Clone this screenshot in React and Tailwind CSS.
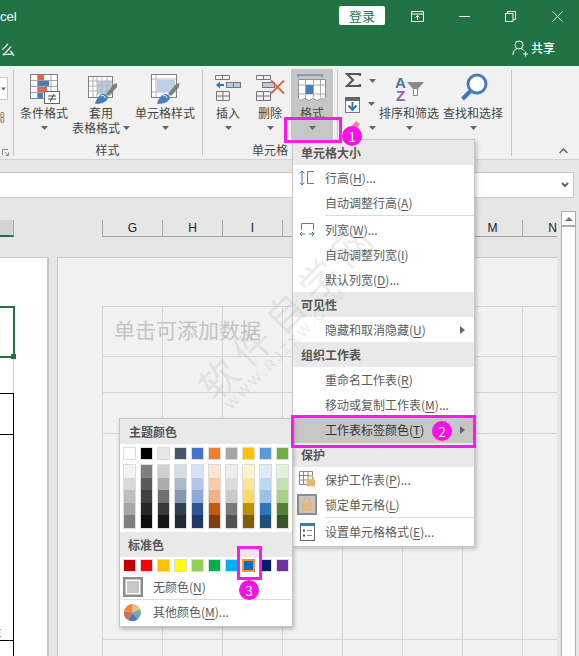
import React from "react";

const font = "font-['Noto_Sans_CJK_SC','Noto_Sans',sans-serif]";

const Caret = ({ className = "" }) => (
  <svg width="7" height="4" viewBox="0 0 7 4" className={className}><path d="M0 0h7L3.5 4z" fill="#666" /></svg>
);

const Ico = ({ box, w, h, children, className = "" }) => (
  <svg width={w} height={h} viewBox={`${box[0]} ${box[1]} ${w} ${h}`} className={className} fill="none">{children}</svg>
);

const Brush = ({ dx = 0, dy = 0 }) => (
  <g transform={`translate(${dx} ${dy})`}>
    <path d="M107 94 L115 84 L118.5 83 L118 87 L110 96z" fill="#7f7f7f" />
    <path d="M96 104 C97 99 100 95 104 94 C107 94 109 96 109 98 C108 101 104 104 96 104z" fill="#4a7ebb" />
    <path d="M102 96 a2.5 2.5 0 0 1 4 2" stroke="#fff" strokeWidth="1" />
  </g>
);

const icons = {
  cond: (
    <Ico box={[28, 74]} w={32} h={31}>
      <rect x="30.5" y="74.5" width="27" height="24" fill="#fff" stroke="#808080" />
      <path d="M37.5 75v23M51 75v23M31 80.5h26M31 86.5h26M31 92.5h26" stroke="#a6a6a6" />
      <rect x="38" y="75" width="6" height="5" fill="#e0684b" />
      <rect x="38" y="81" width="11" height="5" fill="#4a7ebb" />
      <rect x="38" y="87" width="9" height="5" fill="#e0684b" />
      <rect x="38" y="93" width="5" height="5" fill="#4a7ebb" />
      <rect x="44.5" y="91.5" width="15" height="12" fill="#fff" stroke="#666" />
      <path d="M48 96h8M48 99h8M54 94l-4 8" stroke="#444" />
    </Ico>
  ),
  table: (
    <Ico box={[86, 74]} w={32} h={31}>
      <rect x="89.5" y="76.5" width="24" height="21" fill="#fff" stroke="#808080" />
      <rect x="98" y="81" width="15" height="14" fill="#b8cce4" />
      <path d="M94 77v20M98 77v20M103 77v20M108 77v20M90 81h23M90 86h23M90 91h23" stroke="#b5b5b5" />
      <Brush />
    </Ico>
  ),
  cell: (
    <Ico box={[150, 74]} w={32} h={31}>
      <rect x="152.5" y="74.5" width="25" height="23" fill="#fff" stroke="#808080" />
      <path d="M153 79h24M153 92h24M157 75v22" stroke="#b5b5b5" />
      <rect x="158" y="80" width="18" height="12" fill="#bfd0e6" />
      <Brush dx={62} />
    </Ico>
  ),
  insert: (
    <Ico box={[212, 74]} w={32} h={31}>
      <path d="M215.5 75.5h14v4h-14zM222.5 75.5v4M216.5 91.5h13v9h-13zM223 91.5v9M216.5 96h13" stroke="#777" />
      <rect x="226.5" y="82.5" width="14" height="5" fill="#b8cce4" stroke="#777" />
      <path d="M233.5 82.5v5" stroke="#777" />
      <path d="M224 85h-5" stroke="#2e75b6" strokeWidth="2" />
      <path d="M216 85l4-3.5v7z" fill="#2e75b6" />
    </Ico>
  ),
  del: (
    <Ico box={[254, 74]} w={32} h={31}>
      <path d="M256.5 75.5h14v4h-14zM263.5 75.5v4M256.5 91.5h14v9h-14zM263.5 91.5v9M256.5 96h14" stroke="#777" />
      <rect x="262.5" y="82.5" width="12" height="5" fill="#b8cce4" stroke="#777" />
      <path d="M271 80.5l13 13M284 80.5l-13 13" stroke="#d9694f" strokeWidth="2" />
    </Ico>
  ),
  format: (
    <Ico box={[296, 74]} w={32} h={30}>
      <path d="M298 73v4M322 73v4M299 75h22" stroke="#3f77b5" />
      <path d="M298 79h28v19l-2 2-3-1-4 2-4-2-4 2-4-2-4 2-3-2z" fill="#fff" />
      <path d="M305.5 80v20M313.5 80v17M320.5 80v17M298 85h28M298 94h28" stroke="#a8a8a8" />
      <path d="M298.5 79.5h27v18l-1.5 2-3-1-4 2-4-2-4 2-4-2-4 2-2.5-2z" stroke="#8f8f8f" />
      <rect x="306" y="85" width="7" height="9" fill="#4a7ebb" />
    </Ico>
  ),
};

const RibbonBtn = ({ w, icon, lines, arrowInline, className = "", iconClass = "" }) => (
  <div className={`flex flex-col items-center ${className}`} style={{ width: w }}>
    <div className={`h-[35px] pt-[4px] ${iconClass}`}>{icon}</div>
    {lines.map((l, i) => (
      <div key={i} className="flex items-center gap-[3px] whitespace-nowrap text-[12px] leading-[15px]">
        {l}
        {arrowInline && i === lines.length - 1 && <Caret />}
      </div>
    ))}
    {!arrowInline && <div className="flex h-[15px] items-center"><Caret /></div>}
  </div>
);

const Header = ({ children, h = "h-[25px]" }) => (
  <div className={`flex ${h} items-center bg-[#e9e9e9] pl-[8px] text-[12px] font-bold text-[#555]`}>{children}</div>
);

const U = ({ children }) => <span className="underline underline-offset-2">{children}</span>;

const Item = ({ icon, label, k, tail = "", arrow, className = "", h = "h-[25px]" }) => (
  <div className={`relative flex ${h} items-center pl-[32px] text-[12px] text-[#5a5a5a] ${className}`}>
    {icon && <span className="absolute left-[3px] top-[1px] flex h-[23px] w-[22px] items-center justify-center">{icon}</span>}
    <span className="whitespace-nowrap">{label}(<U>{k}</U>){tail}</span>
    {arrow && (
      <svg width="5" height="8" viewBox="0 0 5 8" className="absolute right-[9px] top-[9px]"><path d="M0 0l5 4-5 4z" fill="#666" /></svg>
    )}
  </div>
);

const Sep = () => <div className="mb-px ml-[32px] h-px bg-[#dcdcdc]" />;

const Lock = ({ x = 0, y = 0, s = 1 }) => (
  <g transform={`translate(${x} ${y}) scale(${s})`}>
    <path d="M2.5 5V3.2a2.5 2.5 0 0 1 5 0V5" stroke="#e2b877" strokeWidth="1.4" fill="none" />
    <rect x="0.5" y="5" width="9" height="7" fill="#e2b877" />
  </g>
);

const theme = ["#ffffff", "#000000", "#e7e6e6", "#44546a", "#4472c4", "#ed7d31", "#a5a5a5", "#ffc000", "#5b9bd5", "#70ad47"];
const shades = [
  ["#f2f2f2", "#d9d9d9", "#bfbfbf", "#a6a6a6", "#7f7f7f"],
  ["#7f7f7f", "#595959", "#404040", "#262626", "#0d0d0d"],
  ["#d0cece", "#aeabab", "#757171", "#3a3838", "#171616"],
  ["#d6dce4", "#adb9ca", "#8497b0", "#333f4f", "#222a35"],
  ["#d9e2f3", "#b4c6e7", "#8eaadb", "#2f5496", "#1f3864"],
  ["#fbe5d5", "#f7cbac", "#f4b183", "#c55a11", "#833c0b"],
  ["#ededed", "#dbdbdb", "#c9c9c9", "#7b7b7b", "#525252"],
  ["#fff2cc", "#fee599", "#ffd965", "#bf9000", "#7f6000"],
  ["#deeaf6", "#bdd7ee", "#9cc3e5", "#2e75b5", "#1e4e79"],
  ["#e2efd9", "#c5e0b3", "#a8d08d", "#538135", "#375623"],
];
const standard = ["#c00000", "#ff0000", "#ffc000", "#ffff00", "#92d050", "#00b050", "#00b0f0", "#0070c0", "#002060", "#7030a0"];

const Badge = ({ n, className }) => (
  <div className={`absolute flex h-[20px] w-[20px] items-center justify-center rounded-full bg-[#f611e6] text-[13px] leading-none text-white ${className}`}>{n}</div>
);

const rows = ["h-[36px]", "h-[41px]", "h-[206px]", "h-[17px]"];
const colCells = [0, 1, 2, 3, 4, 5, 6, 7];

export default function App() {
  return (
    <div className={`relative h-[656px] w-[579px] overflow-hidden bg-[#e6e6e6] ${font}`}>
      {/* title bar */}
      <div className="h-[66px] bg-[#217346] text-white">
        <div className="flex h-[33px] items-center">
          <span className="w-[339px] font-['Liberation_Sans',sans-serif] text-[13px] leading-none">cel</span>
          <div className="mt-[-2px] flex h-[19px] w-[46px] items-center justify-center rounded-[2px] bg-white text-[13px] text-[#217346]">登录</div>
          <svg width="14" height="11" viewBox="0 0 14 11" className="ml-[26px]"><path d="M.5.5h12v10H.5zM.5 3h12M6.5 9V5M4.5 6.5l2-2 2 2" stroke="#fff" fill="none" /></svg>
          <div className="ml-[34px] h-px w-[11px] bg-white" />
          <svg width="11" height="11" viewBox="0 0 11 11" className="ml-[35px]"><path d="M.5 2.5h7.5v8H.5zM2.5 2.5V.5h8v8H8" stroke="#fff" fill="none" /></svg>
          <svg width="11" height="11" viewBox="0 0 11 11" className="ml-[36px]"><path d="M.5.5l10 10M10.5.5l-10 10" stroke="#fff" /></svg>
        </div>
        <div className="flex h-[33px] items-center">
          <span className="mt-[-1px] w-[512px] pl-[1px] text-[14px] leading-none">么</span>
          <svg width="16" height="17" viewBox="0 0 16 17" className="mt-[-2px]"><circle cx="7" cy="5" r="4" stroke="#fff" fill="none" /><path d="M1 15c0-4 2-6 4-6.500M9 8.500c1 .3 2 1 2.500 2M11 14h5M13.500 11.500v5" stroke="#fff" fill="none" /></svg>
          <span className="ml-[3px] mt-[-4px] text-[12px] font-medium leading-none">共享</span>
        </div>
      </div>

      {/* ribbon */}
      <div className="flex h-[94px] border-b border-[#d2d2d2] bg-[#f1f1f1] pt-[4px] text-[#444]">
        <div className="relative h-[86px] w-[14px] border-r border-[#c6c6c6]">
          <div className="absolute left-[-1px] top-[7px] flex h-[23px] w-[9px] items-center justify-end border border-[#c6c6c6] bg-white pr-px">
            <Caret className="w-[5px]" />
          </div>
          <div className="absolute left-0 top-[42px] text-[8px] leading-[5px] text-[#555]">0<br />0</div>
          <svg width="7" height="7" viewBox="0 0 7 7" className="absolute left-[2px] top-[79px]"><path d="M.5 6V.5H6M3 3l3.500 3.500M6.500 3.500v3h-3" stroke="#888" fill="none" /></svg>
        </div>

        <div className="flex h-[86px] w-[189px] flex-col border-r border-[#c6c6c6]">
          <div className="flex">
            <RibbonBtn w={60} icon={icons.cond} lines={["条件格式"]} />
            <RibbonBtn w={54} icon={icons.table} lines={["套用", "表格格式"]} arrowInline />
            <RibbonBtn w={74} icon={icons.cell} lines={["单元格样式"]} />
          </div>
          <div className="mt-auto h-[12px] pr-[1px] text-center text-[12px] leading-[12px]">样式</div>
        </div>

        <div className="relative flex h-[86px] w-[135px] flex-col border-r border-[#c6c6c6]">
          <div className="flex">
            <RibbonBtn w={50} icon={icons.insert} lines={["插入"]} />
            <RibbonBtn w={34} icon={icons.del} lines={["删除"]} />
            <RibbonBtn w={42} icon={icons.format} lines={["格式"]} className="ml-[4px] mt-[-1px] h-[70px] bg-[#c6c6c6] pt-px" />
          </div>
          <div className="mt-auto h-[12px] whitespace-nowrap pl-[49px] text-[12px] leading-[12px]">单元格</div>
        </div>

        <div className="flex h-[86px] w-[174px] border-r border-[#c6c6c6]">
          <div className="flex w-[39px] flex-col pl-[7px] pt-[3px]">
            <div className="flex h-[23px] items-start">
              <svg width="16" height="15" viewBox="0 0 16 15"><path d="M15 3V1H2l6 6-6 6h13v-2" stroke="#555" strokeWidth="2" fill="none" /></svg>
              <Caret className="ml-[8px] mt-[6px]" />
            </div>
            <div className="flex h-[24px] items-start">
              <svg width="15" height="16" viewBox="0 0 15 16" className="mt-px"><rect x=".5" y=".5" width="14" height="15" fill="#fff" stroke="#777" /><rect x="0" y="0" width="15" height="4" fill="#666" /><path d="M7.500 5v7" stroke="#2e75b6" strokeWidth="2" /><path d="M3.500 8.500l4 4.500 4-4.500" stroke="#2e75b6" strokeWidth="2" fill="none" /></svg>
              <Caret className="ml-[8px] mt-[6px]" />
            </div>
            <div className="flex items-start">
              <svg width="16" height="15" viewBox="0 0 16 15"><path d="M5 8l6-7 4 3-6 8H7z" fill="#e98493" /></svg>
              <Caret className="ml-[8px] mt-[6px]" />
            </div>
          </div>
          <RibbonBtn
            w={64}
            lines={["排序和筛选"]}
            icon={
              <svg width="34" height="30" viewBox="0 0 34 30" className="ml-[-2px]">
                <text x="4" y="14" fontSize="15" fontWeight="700" fill="#3f77b5" fontFamily="Liberation Sans, sans-serif">A</text>
                <text x="5" y="27" fontSize="15" fontWeight="700" fill="#8a5fb0" fontFamily="Liberation Sans, sans-serif">Z</text>
                <path d="M16 8h17l-6 7v7h-5v-7z" fill="#8a8a8a" />
                <path d="M23 15v6h3v-6" fill="#fff" />
              </svg>
            }
          />
          <RibbonBtn
            w={64}
            lines={["查找和选择"]}
            icon={
              <svg width="30" height="28" viewBox="0 0 30 28" className="ml-[1px] mt-[-1px]">
                <circle cx="18" cy="11" r="9" stroke="#4a7ebb" strokeWidth="3" fill="#fff" />
                <path d="M11.500 18L3.500 26" stroke="#3f77b5" strokeWidth="4" />
              </svg>
            }
          />
        </div>

        <div className="relative flex-1">
          <svg width="9" height="6" viewBox="0 0 9 6" className="absolute right-[11px] top-[78px]"><path d="M.5 5l4-4 4 4" stroke="#666" strokeWidth="1.500" fill="none" /></svg>
        </div>
      </div>

      {/* formula bar */}
      <div className="px-0 pt-[12px]">
        <div className="flex h-[26px] w-[574px] items-center justify-end border-y border-r border-[#c6c6c6] bg-white pr-[4px]">
          <svg width="8" height="6" viewBox="0 0 8 6"><path d="M1 1l3 3 3-3" stroke="#666" strokeWidth="2" fill="none" /></svg>
        </div>
      </div>

      {/* sheet region */}
      <div className="flex">
        <div className="w-[561px]">
          {/* column headers */}
          <div className="mt-[22px] flex h-[17px]">
            <div className="h-[17px] w-[14px] border-b-2 border-r border-[#217346] border-r-[#a8a8a8] bg-[#d3d3d3]" />
            <div className="ml-[88px] flex w-[455px] overflow-hidden border-b border-[#a0a0a0] font-['Liberation_Sans',sans-serif] text-[12px] leading-[16px] text-[#222]">
              {["G", "H", "I", "J", "K", "L", "M", "N"].map((c) => (
                <div key={c} className="w-[60px] shrink-0 border-l border-[#a8a8a8] text-center">{c}</div>
              ))}
            </div>
          </div>
          {/* pages */}
          <div className="mt-[20px] flex h-[399px]">
            <div className="relative h-full w-[49px] border-r-2 border-t border-[#c6c6c6] bg-white">
              <div className="mt-[48px] h-[52px] w-[15px] border-y-2 border-r-2 border-[#217346] border-t-[#217346]" />
              <div className="relative ml-[13px] h-[35px] border-l border-[#c9c9c9]" />
              <div className="h-[41px] w-[14px] border-r border-t border-black" />
              <div className="relative h-[206px] w-[14px] border-r border-t border-black">
                <span className="absolute bottom-[2px] left-[-5px] text-[11px] leading-none text-[#3f77b5]">E</span>
              </div>
              <div className="h-[17px] w-[14px] border-r border-t border-black" />
              <div className="absolute left-[11px] top-[96px] h-[5px] w-[5px] bg-[#217346]" />
            </div>
            <div className="ml-[8px] h-full w-[500px] border-l border-t border-[#c6c6c6] bg-[#f1f1f1]">
              <div className="flex h-[48px]" />
              <div className="flex h-[50px] pl-[44px]">
                {colCells.map((c) => (
                  <div key={c} className={`relative border-l border-t border-[#d4d4d4] ${c === 7 ? "w-[35px]" : "w-[60px]"}`}>
                    {c === 0 && (
                      <span className="absolute left-[11px] top-[7px] whitespace-nowrap text-[21px] leading-[30px] text-[#c4c4c4]">单击可添加数据</span>
                    )}
                  </div>
                ))}
              </div>
              {rows.map((r, i) => (
                <div key={i} className={`flex pl-[44px] ${r}`}>
                  {colCells.map((c) => (
                    <div key={c} className={`border-l border-t border-[#d4d4d4] ${c === 7 ? "w-[35px]" : "w-[60px]"}`} />
                  ))}
                </div>
              ))}
            </div>
          </div>
        </div>
        {/* scrollbar */}
        <div className="mt-[13px] h-[445px] w-[15px] border-x border-t border-[#adadad] bg-white">
          <div className="flex h-[15px] items-center justify-center border-b-2 border-[#adadad]">
            <svg width="8" height="4" viewBox="0 0 8 4"><path d="M4 0l4 4H0z" fill="#777" /></svg>
          </div>
        </div>
      </div>

      {/* context menu */}
      <div className="absolute left-[292px] top-[139px] w-[183px] border border-[#c6c6c6] bg-white shadow-[2px_2px_4px_rgba(0,0,0,0.2)]">
        <Header>单元格大小</Header>
        <Item
          label="行高"
          k="H"
          tail="..."
          icon={
            <svg width="16" height="16" viewBox="0 0 16 16"><path d="M3 1.500v13M.8 3.500L3 1l2.200 2.500M.8 12.500L3 15l2.200-2.500" stroke="#3f77b5" fill="none" /><path d="M15 1.500H8.500v12H15" stroke="#777" fill="none" /></svg>
          }
        />
        <Item label="自动调整行高" k="A" />
        <Sep />
        <Item
          label="列宽"
          k="W"
          tail="..."
          icon={
            <svg width="16" height="15" viewBox="0 0 16 15"><path d="M2.500 8V1.500h12V8" stroke="#777" fill="none" /><path d="M1 12h5M10 12h5M3 10l-2 2 2 2M13 10l2 2-2 2" stroke="#3f77b5" fill="none" /></svg>
          }
        />
        <Item label="自动调整列宽" k="I" />
        <Item label="默认列宽" k="D" tail="..." />
        <Header>可见性</Header>
        <Item label="隐藏和取消隐藏" k="U" arrow />
        <Header>组织工作表</Header>
        <Item label="重命名工作表" k="R" />
        <Item label="移动或复制工作表" k="M" tail="..." />
        <Item label="工作表标签颜色" k="T" arrow h="h-[26px]" className="bg-[#c6c6c6] text-[#333]" />
        <Header h="h-[24px]">保护</Header>
        <Item
          label="保护工作表"
          k="P"
          tail="..."
          icon={
            <svg width="17" height="17" viewBox="0 0 17 17"><path d="M.5.5h13v13H.5zM.5 4.500h13M.5 9h13M4.500.5v13M9 .5v13" stroke="#8a8a8a" fill="none" /><Lock x="7" y="4" s="0.95" /></svg>
          }
        />
        <Item
          label="锁定单元格"
          k="L"
          icon={
            <span className="flex h-[21px] w-[20px] items-center justify-center border-2 border-[#8c8c8c] bg-[#c6c6c6]">
              <svg width="12" height="15" viewBox="0 0 10 13"><Lock /></svg>
            </span>
          }
        />
        <Sep />
        <Item
          label="设置单元格格式"
          k="E"
          tail="..."
          icon={
            <svg width="15" height="18" viewBox="0 0 15 18"><rect x=".5" y=".5" width="14" height="17" fill="#fff" stroke="#666" /><rect x="0" y="0" width="15" height="3" fill="#3f77b5" /><path d="M3 7.500h2M3 12.500h2" stroke="#555" strokeWidth="2" /><path d="M7 7.500h5M7 12.500h5" stroke="#888" /></svg>
          }
        />
        <div className="h-[2px]" />
      </div>

      {/* colour palette */}
      <div className="absolute left-[119px] top-[418px] h-[209px] w-[174px] border border-[#c6c6c6] bg-white shadow-[1px_2px_4px_rgba(0,0,0,0.25)]">
        <div className="flex h-[25px] items-center bg-[#e9e9e9] pl-[9px] text-[12px] font-bold text-[#555]">主题颜色</div>
        <div className="mt-[3px] flex gap-[4px] pl-[3px]">
          {theme.map((c) => (
            <div key={c} className="h-[13px] w-[13px] border border-[#dcdcdc]" style={{ background: c }} />
          ))}
        </div>
        <div className="mt-[4px] flex gap-[4px] pl-[3px]">
          {shades.map((col, i) => (
            <div key={i} className="flex h-[65px] w-[13px] flex-col border border-[#dcdcdc]">
              {col.map((c) => (
                <div key={c} className="flex-1" style={{ background: c }} />
              ))}
            </div>
          ))}
        </div>
        <div className="mt-[3px] flex h-[25px] items-center bg-[#e9e9e9] pl-[8px] text-[12px] font-bold text-[#555]">标准色</div>
        <div className="mt-[2px] flex gap-[4px] pl-[3px]">
          {standard.map((c, i) => (
            <div
              key={c}
              className={`h-[13px] w-[13px] ${i === 7 ? "border-2 border-[#f29436]" : "border border-[#dcdcdc]"}`}
              style={{ background: c }}
            />
          ))}
        </div>
        <div className="mt-[3px] flex h-[23px] items-center pl-[3px] text-[12px] text-[#5a5a5a]">
          <div className="h-[20px] w-[20px] border-2 border-[#8c8c8c] bg-[#c6c6c6] outline outline-1 -outline-offset-4 outline-white" />
          <span className="ml-[10px]">无颜色(<U>N</U>)</span>
        </div>
        <div className="ml-[3px] mr-px mt-px h-px bg-[#dcdcdc]" />
        <div className="flex h-[24px] items-center pl-[4px] text-[12px] text-[#5a5a5a]">
          <svg width="17" height="17" viewBox="0 0 17 17">
            <path d="M8.500 8.500L8.500 0A8.500 8.500 0 0 1 16 5z" fill="#e8bd85" />
            <path d="M8.500 8.500L16 5A8.500 8.500 0 0 1 14 15z" fill="#7da7a0" />
            <path d="M8.500 8.500L14 15A8.500 8.500 0 0 1 4 16z" fill="#4a7ebb" />
            <path d="M8.500 8.500L4 16A8.500 8.500 0 0 1 0 7z" fill="#d9694f" />
            <path d="M8.500 8.500L0 7A8.500 8.500 0 0 1 8.500 0z" fill="#e98a3c" />
          </svg>
          <span className="ml-[12px] whitespace-nowrap">其他颜色(<U>M</U>)...</span>
        </div>
      </div>

      {/* callouts */}
      <div className="absolute left-[284px] top-[117px] h-[26px] w-[58px] border-[3px] border-[#ff17ee]" />
      <div className="absolute left-[291px] top-[415px] h-[33px] w-[185px] border-[3px] border-[#ff17ee]" />
      <div className="absolute left-[237px] top-[546px] h-[34px] w-[25px] border-[3px] border-[#ff17ee]" />
      <Badge n="1" className="left-[342px] top-[126px]" />
      <Badge n="2" className="left-[432px] top-[421px]" />
      <Badge n="3" className="left-[239px] top-[580px]" />

      {/* watermark */}
      <div className="pointer-events-none absolute left-[175px] top-[295px] w-[200px] -rotate-45 whitespace-nowrap text-center text-[38px] leading-[52px] tracking-[9px] text-[rgba(170,170,170,0.22)]">软件自学网</div>
      <div className="pointer-events-none absolute left-[186px] top-[338px] w-[200px] -rotate-45 whitespace-nowrap text-center font-['Liberation_Sans',sans-serif] text-[14px] leading-[20px] tracking-[3px] text-[rgba(170,170,170,0.25)]">WWW.RJZXW.COM</div>
    </div>
  );
}
